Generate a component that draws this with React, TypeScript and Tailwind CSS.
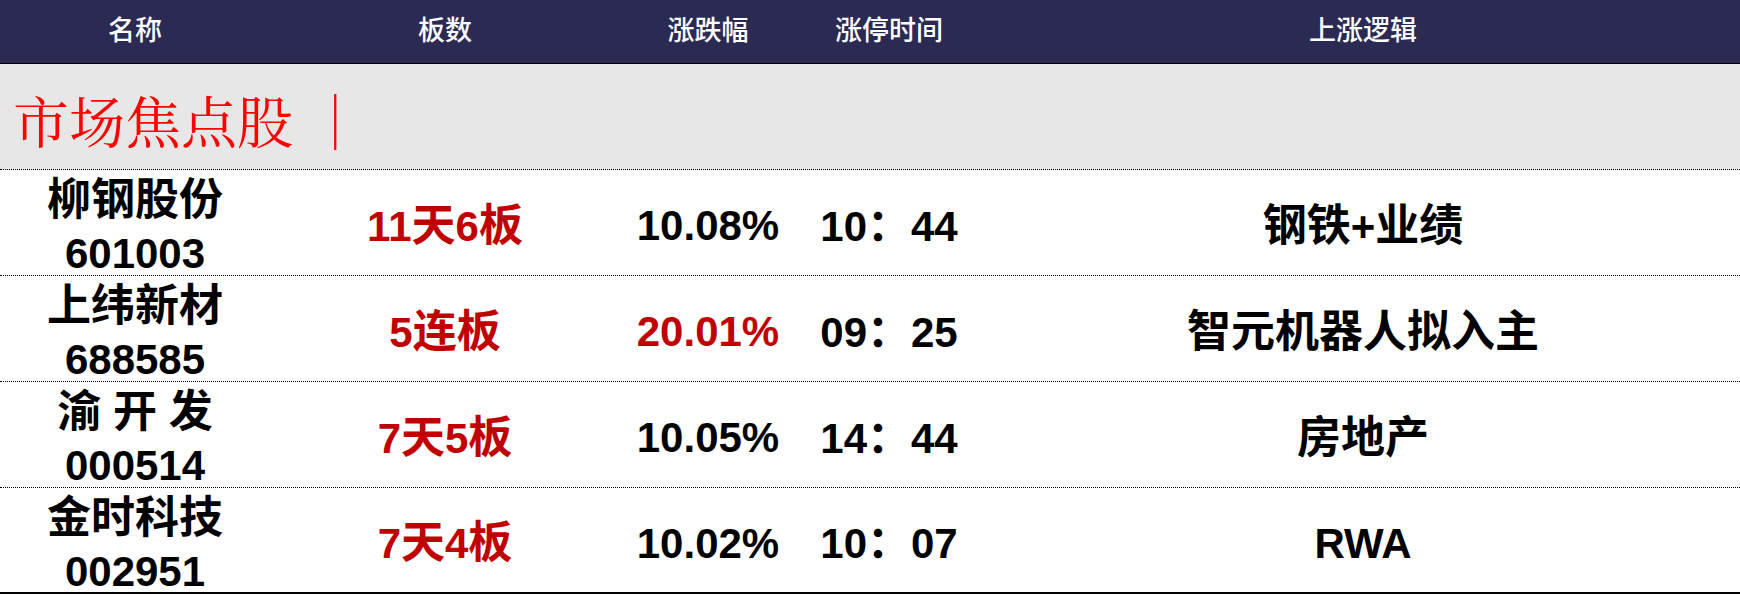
import React from "react";

type Row = {
  name: string;
  code: string;
  boards: string;
  pct: string;
  pctRed?: boolean;
  time: string;
  logic: string;
};

const rows: Row[] = [
  { name: "柳钢股份", code: "601003", boards: "11天6板", pct: "10.08%", time: "10：44", logic: "钢铁+业绩" },
  { name: "上纬新材", code: "688585", boards: "5连板", pct: "20.01%", pctRed: true, time: "09：25", logic: "智元机器人拟入主" },
  { name: "渝 开 发", code: "000514", boards: "7天5板", pct: "10.05%", time: "14：44", logic: "房地产" },
  { name: "金时科技", code: "002951", boards: "7天4板", pct: "10.02%", time: "10：07", logic: "RWA" },
];

const sans = { fontFamily: '"Liberation Sans", "Noto Sans CJK SC", sans-serif' };
const serif = { fontFamily: '"Noto Serif CJK SC", "Liberation Serif", "Noto Sans CJK SC", serif' };

function Mixed({ text }: { text: string }) {
  const parts = text.match(/[\x00-\x7F]+|[^\x00-\x7F]+/g) || [];
  return (
    <>
      {parts.map((p, i) =>
        /^[\x00-\x7F]/.test(p) ? (
          <span key={i} className="text-[42px]">
            {p}
          </span>
        ) : (
          <span key={i} className="text-[44px]">
            {p}
          </span>
        )
      )}
    </>
  );
}

export default function App() {
  return (
    <div className="w-[1740px] h-[595px] bg-white overflow-hidden" style={sans}>
      {/* Header */}
      <div className="flex h-[64px] items-center bg-[#2b2a53] border-b border-black text-white text-[27px] font-medium">
        <div className="w-[270px] flex justify-center">名称</div>
        <div className="w-[350px] flex justify-center">板数</div>
        <div className="w-[176px] flex justify-center">涨跌幅</div>
        <div className="w-[186px] flex justify-center">涨停时间</div>
        <div className="flex-1 flex justify-center pl-[4px]">上涨逻辑</div>
      </div>

      {/* Section title */}
      <div className="h-[106px] bg-[#e7e7e7] border-b border-dotted border-black flex items-center pl-[13px] pt-[4px]">
        <span className="text-[#ff0000] text-[56px] leading-none whitespace-pre" style={serif}>
          市场焦点股 ｜
        </span>
      </div>

      {/* Rows */}
      {rows.map((r, i) => (
        <div
          key={r.code}
          className={
            i === rows.length - 1
              ? "flex h-[106px] items-center border-b-2 border-solid border-black text-black font-bold"
              : "flex h-[106px] items-center border-b border-dotted border-black text-black font-bold"
          }
        >
          <div className="w-[270px] flex flex-col items-center pt-[9px]">
            <div className="h-[54px] flex items-center justify-center whitespace-pre leading-none">
              <Mixed text={r.name} />
            </div>
            <div className="h-[54px] flex items-center justify-center text-[42px] leading-none">{r.code}</div>
          </div>
          <div className="w-[350px] flex justify-center items-baseline text-[#c00000] pt-[6px]">
            <Mixed text={r.boards} />
          </div>
          <div
            className={
              r.pctRed
                ? "w-[176px] flex justify-center text-[42px] text-[#c00000] pt-[6px]"
                : "w-[176px] flex justify-center text-[42px] text-black pt-[6px]"
            }
          >
            {r.pct}
          </div>
          <div className="w-[186px] flex justify-center items-baseline pt-[6px] whitespace-pre">
            <Mixed text={r.time} />
          </div>
          <div className="flex-1 flex justify-center items-baseline pl-[4px] pt-[6px]">
            <Mixed text={r.logic} />
          </div>
        </div>
      ))}
    </div>
  );
}
